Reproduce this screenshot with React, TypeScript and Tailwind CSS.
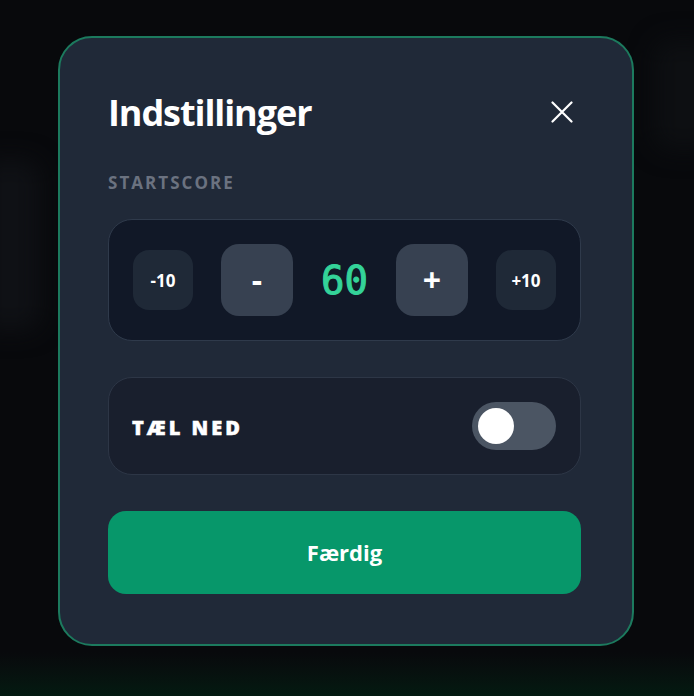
import { useState } from 'react'

const sans = 'font-["Open_Sans","Noto_Sans",sans-serif]'

function StepButton({ label, big }: { label: string; big?: boolean }) {
  return (
    <button
      className={
        big
          ? 'w-[72px] h-[72px] rounded-[18px] bg-[#374151] text-white text-[32px] font-bold flex items-center justify-center leading-none'
          : 'w-[60px] h-[60px] rounded-[16px] bg-[#1f2937] text-white text-[17px] font-bold flex items-center justify-center leading-none'
      }
    >
      {label}
    </button>
  )
}

export default function App() {
  const [score, setScore] = useState(60)
  const [countDown, setCountDown] = useState(false)

  return (
    <div className={`relative h-[696px] w-full overflow-hidden bg-[#08090c] ${sans}`}>
      {/* backdrop: blurred app behind the dialog */}
      <div className="absolute inset-0 pointer-events-none">
        <div className="absolute left-[-20px] top-[160px] w-[60px] h-[170px] rounded-2xl bg-[#0f1115] blur-md" />
        <div className="absolute right-[-20px] top-[40px] w-[60px] h-[110px] rounded-2xl bg-[#0d0f12] blur-md" />
        <div className="absolute left-0 right-0 bottom-0 h-[44px] bg-gradient-to-b from-[#08090c] to-[#031a11]" />
      </div>

      <div className="relative pt-[36px] pl-[58px]">
        <div className="w-[576px] rounded-[34px] border-2 border-[#1c7a5e] bg-[#202938] pt-12 pb-[50px] pl-12 pr-[51px]">
          {/* header */}
          <div className="flex items-center justify-between h-[52px]">
            <h2 className="mt-[2px] text-[36px] font-bold text-white tracking-[-0.03em] leading-[40px]">Indstillinger</h2>
            <button className="w-[32px] h-[32px] flex items-center justify-center text-white mr-[3px]">
              <svg width="22" height="22" viewBox="0 0 22 22" fill="none" stroke="currentColor" strokeWidth="2.2" strokeLinecap="round">
                <path d="M1.5 1.5L20.5 20.5M20.5 1.5L1.5 20.5" />
              </svg>
            </button>
          </div>

          {/* startscore */}
          <p className="mt-[33px] text-[17px] leading-[24px] font-bold tracking-[0.12em] text-[#6b7280]">STARTSCORE</p>
          <div className="mt-[24px] rounded-[24px] border border-[#2f3a4b] bg-[#111827] p-6 flex items-center justify-between">
            <div onClick={() => setScore(score - 10)}><StepButton label="-10" /></div>
            <div onClick={() => setScore(score - 1)}><StepButton label="-" big /></div>
            <span className='font-["DejaVu_Sans_Mono",monospace] text-[39px] text-[#34d399] leading-none [-webkit-text-stroke:1px_#34d399]'>{score}</span>
            <div onClick={() => setScore(score + 1)}><StepButton label="+" big /></div>
            <div onClick={() => setScore(score + 10)}><StepButton label="+10" /></div>
          </div>

          {/* count down */}
          <div className="mt-[36px] rounded-[24px] border border-[#2d3646] bg-[#191f2d] p-6 flex items-center justify-between">
            <span className="ml-[-1px] mt-[3px] text-[20px] font-extrabold tracking-[0.15em] text-white [-webkit-text-stroke:0.5px_white]">TÆL NED</span>
            <button
              onClick={() => setCountDown(!countDown)}
              className={`w-[84px] h-[48px] rounded-full p-[6px] flex ${countDown ? 'bg-[#059669] justify-end' : 'bg-[#4b5563] justify-start'}`}
            >
              <span className="block w-[36px] h-[36px] rounded-full bg-white" />
            </button>
          </div>

          {/* done */}
          <button className="mt-[36px] w-full h-[83px] rounded-[18px] bg-[#07976a] text-white text-[22px] font-bold">
            Færdig
          </button>
        </div>
      </div>
    </div>
  )
}
